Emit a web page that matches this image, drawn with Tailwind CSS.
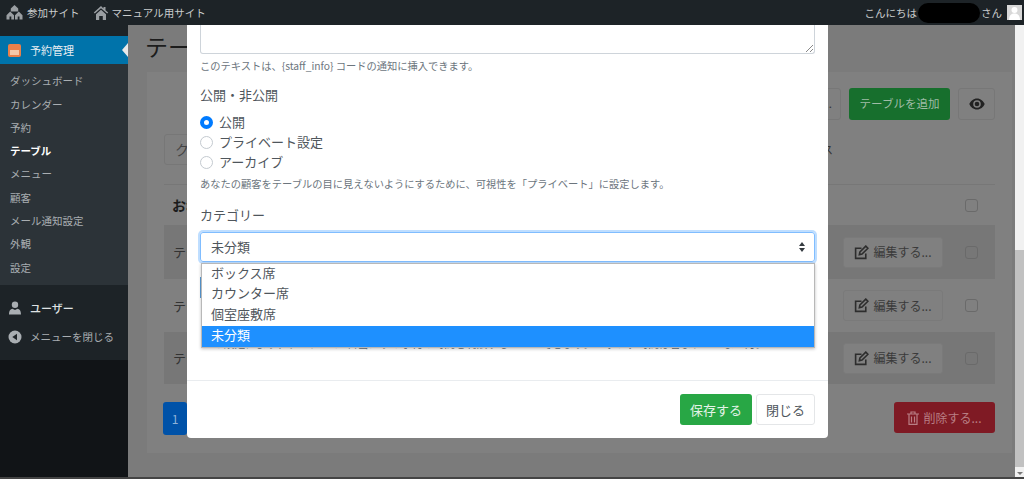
<!DOCTYPE html>
<html lang="ja">
<head>
<meta charset="UTF-8">
<title>テーブル</title>
<script src="https://cdn.jsdelivr.net/npm/@tailwindcss/browser@4"></script>
</head>
<body class="h-[479px] w-[1024px] overflow-hidden bg-[#7b7b7b] font-['Noto_Sans_CJK_JP','Noto_Sans',sans-serif] text-[#333]">
<div class="relative h-[479px] w-[1024px] overflow-hidden">

  <!-- admin bar -->
  <header class="flex h-[25px] items-center justify-between bg-[#1d2327] pl-[6px] pr-[2px] text-[10.500px] text-[#c9cccd]">
    <div class="flex items-center">
      <svg class="mr-[4px] h-[17px] w-[17px]" viewBox="0 0 17 17" fill="#9a9ea2"><path d="M8.500 1 4.800 4.600v3h7.400v-3z"/><path d="M4.200 7.500.5 11.200v4.300h3v-3h1.800v3H8v-4.300z"/><path d="M12.800 7.500 9 11.200v4.300h2.700v-3h1.800v3h3v-4.300z"/></svg>
      <span>参加サイト</span>
      <svg class="ml-[13px] mr-[3px] h-[16px] w-[16px]" viewBox="0 0 16 16" fill="#9a9ea2"><path d="M8 1 .8 7.600l1 1L8 3.200l6.200 5.400 1-1-2.700-2.400V2h-2v1.400z"/><path d="M3 9.200 8 4.800l5 4.400V15h-3.200v-4H6.200v4H3z"/></svg>
      <span>マニュアル用サイト</span>
    </div>
    <div class="flex items-center">
      <span>こんにちは</span>
      <span class="mx-[1px] h-[20px] w-[62px] rounded-[10px] bg-black"></span>
      <span>さん</span>
      <svg class="ml-[5px] h-[15px] w-[15px]" viewBox="0 0 15 15"><rect width="15" height="15" fill="#d8d8d8"/><circle cx="7.500" cy="5" r="3" fill="#fff"/><path d="M2 15c0-5 2.500-6.500 5.500-6.500S13 10 13 15z" fill="#fff"/></svg>
    </div>
  </header>

  <div class="flex h-[454px]">
    <!-- sidebar -->
    <aside class="flex w-[128px] shrink-0 flex-col bg-[#111417] text-[10.500px] text-[#a9aeb2]">
      <div class="bg-[#2c3338]">
        <div class="h-[11px] bg-[#1d2327]"></div>
        <div class="relative flex h-[28px] items-center bg-[#0073aa] pl-[8px] text-[11px] text-[#e8eef2]">
          <span class="flex h-[13px] w-[13px] items-end justify-center rounded-[2px] bg-[#e9804a] pb-[2px]"><span class="h-[5px] w-[9px] bg-[#f5c8a8]"></span></span>
          <span class="ml-[9px]">予約管理</span>
          <span class="absolute right-0 top-[7px] h-0 w-0 border-y-[7px] border-r-[6px] border-y-transparent border-r-[#e9e9e9]"></span>
        </div>
        <ul class="flex flex-col pb-[6px] pl-[10px] pt-[5.500px]">
          <li class="flex h-[23.300px] items-center">ダッシュボード</li>
          <li class="flex h-[23.300px] items-center">カレンダー</li>
          <li class="flex h-[23.300px] items-center">予約</li>
          <li class="flex h-[23.300px] items-center font-bold text-white">テーブル</li>
          <li class="flex h-[23.300px] items-center">メニュー</li>
          <li class="flex h-[23.300px] items-center">顧客</li>
          <li class="flex h-[23.300px] items-center">メール通知設定</li>
          <li class="flex h-[23.300px] items-center">外観</li>
          <li class="flex h-[23.300px] items-center">設定</li>
        </ul>
      </div>
      <div class="flex h-[75px] flex-col bg-[#1d2327] pl-[8px] pt-[10px]">
        <div class="flex h-[26px] items-center text-[11px] font-medium text-[#dfe1e2]">
          <svg class="h-[14px] w-[14px]" viewBox="0 0 14 14" fill="#a9aeb2"><circle cx="7" cy="3.700" r="3.200"/><path d="M1 13.500c0-4 1.500-5.500 3.500-5.800L7 9l2.500-1.300c2 .3 3.500 1.800 3.500 5.800z"/></svg>
          <span class="ml-[8px]">ユーザー</span>
        </div>
        <div class="mt-[3px] flex h-[26px] items-center text-[#a9aeb2]">
          <svg class="h-[14px] w-[14px]" viewBox="0 0 14 14"><circle cx="7" cy="7" r="6.500" fill="#a9aeb2"/><path d="M9 3.800v6.400L4.300 7z" fill="#1d2327"/></svg>
          <span class="ml-[8px]">メニューを閉じる</span>
        </div>
      </div>
    </aside>

    <!-- page behind the dialog -->
    <main class="w-[887px] shrink-0 pl-[19px] pr-[3px]">
      <h1 class="-ml-[2px] mt-[7px] h-[40px] text-[23px] leading-[28px] text-[#1c1c1c]">テーブル</h1>
      <section class="h-[381px] bg-[#808080] pl-[17px] pr-[17px] pt-[16px]">
        <div class="flex h-[32px] justify-end gap-[8px]">
          <div class="flex w-[90px] items-center justify-end rounded-[3px] border border-[#777] pr-[8px] text-[11.500px] text-[#333]">インポート...</div>
          <button class="h-[32px] w-[101px] rounded-[3px] bg-[#176f2d] text-[11.500px] text-[#9fbca6]">テーブルを追加</button>
          <div class="flex h-[32px] w-[37px] items-center justify-center rounded-[3px] border border-[#777]">
            <svg class="h-[14px] w-[16px]" viewBox="0 0 16 12" fill="#222"><path d="M8 .5C4.500.5 1.500 3 .3 6c1.200 3 4.200 5.500 7.700 5.500s6.500-2.500 7.700-5.500C14.500 3 11.500.5 8 .5zm0 9.300a3.800 3.800 0 1 1 0-7.600 3.800 3.800 0 0 1 0 7.600z"/><circle cx="8" cy="6" r="2.300"/></svg>
          </div>
        </div>
        <div class="mt-[14px] flex h-[31px] items-center justify-between pr-[162px]">
          <div class="flex h-[31px] w-[300px] items-center rounded-[3px] border border-[#777] pl-[10px] text-[14px] text-[#444]">クイック検索</div>
          <span class="text-[11px] text-[#333]">ステータス</span>
        </div>
        <div class="mt-[19px] flex h-[41px] items-center justify-between border-t border-[#777] pl-[8px] pr-[17px] text-[14px] font-bold text-[#1c1c1c]">
          <span>お名前</span>
          <span class="h-[13px] w-[13px] rounded-[3px] border border-[#6a6a6a]"></span>
        </div>
        <div class="flex h-[54px] items-center justify-between bg-[#777777] pl-[9px] pr-[17px] text-[13px] text-[#333]">
          <span>テーブル</span>
          <div class="flex items-center gap-[22px]">
            <div class="flex h-[31px] w-[100px] items-center justify-center rounded-[3px] border border-[#7a7a7a] bg-[#808080] text-[12px] text-[#3a3a3a]"><svg class="mr-[4px] h-[15px] w-[15px]" viewBox="0 0 14 14" fill="none" stroke="#2d2d2d" stroke-width="1.500"><path d="M11 8v4.500H1.500V3H7"/><path d="m5.500 6.500 5.500-5.500 2 2-5.500 5.500-2.500.5z"/></svg>編集する...</div>
            <span class="h-[13px] w-[13px] rounded-[3px] border border-[#6a6a6a]"></span>
          </div>
        </div>
        <div class="flex h-[53px] items-center justify-between pl-[9px] pr-[17px] text-[13px] text-[#333]">
          <span>テーブル</span>
          <div class="flex items-center gap-[22px]">
            <div class="flex h-[31px] w-[100px] items-center justify-center rounded-[3px] border border-[#7a7a7a] bg-[#808080] text-[12px] text-[#3a3a3a]"><svg class="mr-[4px] h-[15px] w-[15px]" viewBox="0 0 14 14" fill="none" stroke="#2d2d2d" stroke-width="1.500"><path d="M11 8v4.500H1.500V3H7"/><path d="m5.500 6.500 5.500-5.500 2 2-5.500 5.500-2.500.5z"/></svg>編集する...</div>
            <span class="h-[13px] w-[13px] rounded-[3px] border border-[#6a6a6a]"></span>
          </div>
        </div>
        <div class="flex h-[52px] items-center justify-between bg-[#777777] pl-[9px] pr-[17px] text-[13px] text-[#333]">
          <span>テーブル</span>
          <div class="flex items-center gap-[22px]">
            <div class="flex h-[31px] w-[100px] items-center justify-center rounded-[3px] border border-[#7a7a7a] bg-[#808080] text-[12px] text-[#3a3a3a]"><svg class="mr-[4px] h-[15px] w-[15px]" viewBox="0 0 14 14" fill="none" stroke="#2d2d2d" stroke-width="1.500"><path d="M11 8v4.500H1.500V3H7"/><path d="m5.500 6.500 5.500-5.500 2 2-5.500 5.500-2.500.5z"/></svg>編集する...</div>
            <span class="h-[13px] w-[13px] rounded-[3px] border border-[#6a6a6a]"></span>
          </div>
        </div>
        <div class="mt-[18px] flex items-start justify-between">
          <div class="-ml-[1px] flex h-[33px] w-[24px] items-center justify-center rounded-[3px] bg-[#0052a8] text-[12px] text-[#8fb2d8]">1</div>
          <button class="flex h-[31px] w-[101px] items-center justify-center rounded-[3px] bg-[#7f1a24] text-[12px] text-[#b97f85]"><svg class="mr-[4px] h-[14px] w-[12px]" viewBox="0 0 12 14" fill="none" stroke="#b97f85" stroke-width="1.200"><path d="M0 3h12M4 3V1h4v2M2 3v10.400h8V3M4.500 5.500v6M7.500 5.500v6"/></svg>削除する...</button>
        </div>
      </section>
    </main>

    <!-- browser scrollbar -->
    <div class="flex w-[9px] flex-col bg-[#f1f1f1]">
      <div class="mt-[225px] h-[217px] bg-[#c1c1c1]"></div>
      <div class="flex flex-1 items-center justify-center"><span class="h-0 w-0 border-x-[3px] border-t-[3px] border-x-transparent border-t-[#777]"></span></div>
    </div>
  </div>

  <!-- window edge at the bottom of the shot -->
  <div class="absolute bottom-0 left-0 h-[2px] w-full bg-[#444]"></div>

  <!-- dialog -->
  <div class="absolute left-[187px] top-[25px] h-[413px] w-[641px] rounded-b-[4px] bg-white text-[#4f565c]">
    <div class="flex h-[355px] flex-col px-[13px]">
      <div class="relative h-[29px] w-[615px] shrink-0 rounded-b-[3px] border border-t-0 border-[#ced4da]">
        <svg class="absolute bottom-[1px] right-[1px] h-[8px] w-[8px]" viewBox="0 0 8 8" stroke="#888" fill="none"><path d="M1 8 8 1M5 8l3-3"/></svg>
      </div>
      <p class="mt-[3px] h-[17px] text-[10.250px] leading-[17px] text-[#6c757d]">このテキストは、{staff_info} コードの通知に挿入できます。</p>
      <p class="mt-[11px] h-[20px] text-[13px] leading-[20px]">公開・非公開</p>
      <div class="mt-[7px] flex h-[20px] items-center text-[13px]">
        <span class="h-[13px] w-[13px] rounded-full border-[4px] border-[#007bff] bg-white"></span><span class="ml-[6px]">公開</span>
      </div>
      <div class="flex h-[20px] items-center text-[13px]">
        <span class="h-[13px] w-[13px] rounded-full border border-[#c4cad0] bg-white"></span><span class="ml-[6px]">プライベート設定</span>
      </div>
      <div class="flex h-[20px] items-center text-[13px]">
        <span class="h-[13px] w-[13px] rounded-full border border-[#c4cad0] bg-white"></span><span class="ml-[6px]">アーカイブ</span>
      </div>
      <p class="mt-[3px] h-[17px] text-[10.250px] leading-[17px] text-[#6c757d]">あなたの顧客をテーブルの目に見えないようにするために、可視性を「プライベート」に設定します。</p>
      <p class="mt-[13px] h-[20px] text-[13px] leading-[20px]">カテゴリー</p>
      <div class="mt-[7px] flex h-[30px] w-[615px] shrink-0 items-center justify-between rounded-[3px] border border-[#80bdff] pl-[10px] pr-[9px] text-[13px] shadow-[0_0_0_2px_#bfdeff]">
        <span>未分類</span>
        <svg class="h-[10px] w-[6px]" viewBox="0 0 6 10" fill="#343a40"><path d="M3 0l3 4H0zM3 10 0 6h6z"/></svg>
      </div>
      <div class="mt-[15px] h-[21px] w-[2px] bg-[#5b9dd9]"></div>
      <p class="mt-[37px] h-[17px] whitespace-nowrap pl-[2px] text-[10.800px] leading-[17px] text-[#6c757d]">この設定により、テーブルの1日当たりの予約の時間を制限することができます。バッファ時間は含まれていません。</p>
    </div>
    <footer class="flex h-[58px] items-center justify-end gap-[4px] border-t border-[#e9ecef] pr-[13px]">
      <button class="h-[31px] w-[72px] rounded-[3px] bg-[#28a745] text-[13px] text-[#e4f3e8]">保存する</button>
      <button class="h-[31px] w-[59px] rounded-[3px] border border-[#e4e6e8] text-[13px] text-[#4f565c]">閉じる</button>
    </footer>

    <!-- open select list -->
    <ul class="absolute left-[14px] top-[238px] w-[614px] border border-[#b8b8b8] bg-white text-[13px] shadow-[0_1px_3px_rgba(0,0,0,0.25)]">
      <li class="flex h-[20.500px] -translate-y-[2px] items-center pl-[9px]">ボックス席</li>
      <li class="flex h-[20.500px] -translate-y-[2px] items-center pl-[9px]">カウンター席</li>
      <li class="flex h-[20.500px] -translate-y-[2px] items-center pl-[9px]">個室座敷席</li>
      <li class="flex h-[21px] items-center bg-[#1e90ff] pl-[9px] text-white"><span class="-translate-y-[1px]">未分類</span></li>
    </ul>
  </div>
</div>
</body>
</html>
